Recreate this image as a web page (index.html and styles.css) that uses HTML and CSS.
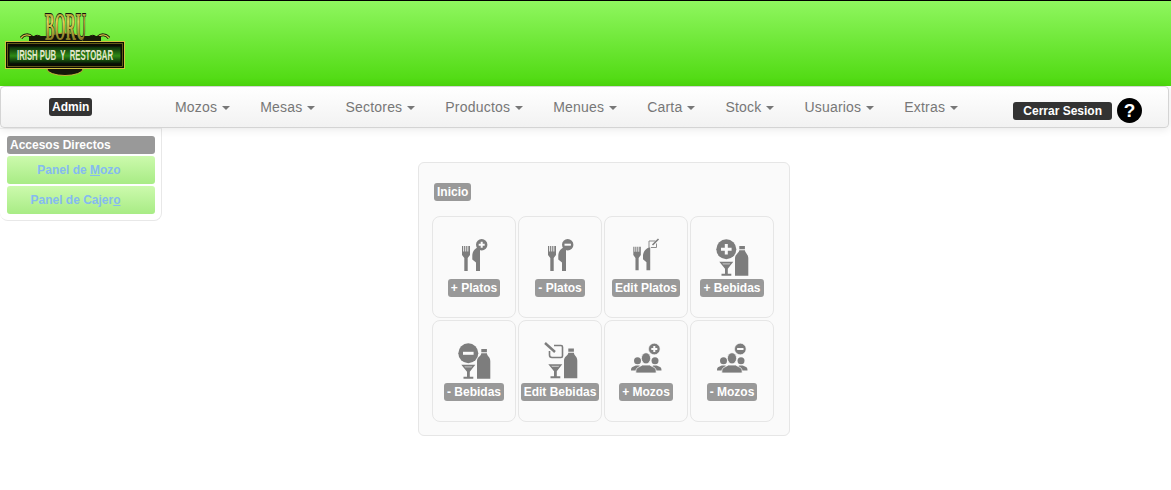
FILE: index.html
```html
<!DOCTYPE html>
<html lang="es">
<head>
<meta charset="utf-8">
<title>Boru</title>
<link rel="stylesheet" href="styles.css">
</head>
<body>
<svg class="defs" width="0" height="0" aria-hidden="true">
  <defs>
    <symbol id="fork" viewBox="0 0 64 47">
      <path d="M20 14h1.200v5.500h.9V14h1.200v5.500h.9V14h1.200v5.500h.9V14H28v9l-2.300 3v13h-3.400V26L20 23z"/>
      <path d="M38 14.500c-4.500 1-7.700 4.500-7.700 9.500v3.500l3.700 3V39h4z"/>
    </symbol>
    <symbol id="glass" viewBox="0 0 64 47">
      <path d="M19.300 29.700h14l-5.500 7v5h3.500v2h-9.800v-2h3.500v-5z"/>
      <path class="glass-in" d="M22.300 31.200h8l-.8 1.200h-6.400z"/>
      <path d="M39.300 14h5.600v3.300h-5.600zM39.300 18.300h5.600c.2 3 3.400 3.700 3.400 8v17.400H35V26.300c0-4.300 4.100-5 4.300-8z"/>
    </symbol>
    <symbol id="people" viewBox="0 0 64 47">
      <circle cx="23.500" cy="24.700" r="3.500"/>
      <circle cx="41" cy="24.700" r="3.500"/>
      <path d="M17 34.500c0-2.300.5-3 2-3.700l2.800-1.300h3.500l2 1.500-4.300 3.500zM47.500 34.500c0-2.300-.5-3-2-3.700l-2.800-1.300h-3.500l-2 1.500 4.300 3.500z"/>
      <ellipse class="person-main" cx="32" cy="22.300" rx="4.600" ry="5.600"/>
      <path class="person-main" d="M21.800 37c0-4 .7-5 3-6l3.700-2h7l3.700 2c2.300 1 3 2 3 6z"/>
    </symbol>
  </defs>
</svg>

<header class="top">
  <svg class="logo" width="120" height="66" viewBox="0 0 120 66" role="img" aria-label="Boru Irish Pub y Restobar">
    <defs>
      <linearGradient id="gold" x1="0" y1="0" x2="0" y2="1">
        <stop offset="0" stop-color="#6a6210"/><stop offset=".4" stop-color="#e2d25a"/><stop offset="1" stop-color="#5a520c"/>
      </linearGradient>
      <linearGradient id="ban" x1="0" y1="0" x2="0" y2="1">
        <stop offset="0" stop-color="#0a280a"/><stop offset=".55" stop-color="#2f8a16"/><stop offset="1" stop-color="#061a06"/>
      </linearGradient>
    </defs>
    <path class="logo-curl-back" d="M16 28c3-4 8-4 11-1 3 3 6 4 9 2-1-3-5-4-7 0M104 28c-3-4-8-4-11-1-3 3-6 4-9 2 1-3 5-4 7 0"/>
    <path class="logo-curl" d="M16 28c3-4 8-4 11-1 3 3 6 4 9 2-1-3-5-4-7 0M104 28c-3-4-8-4-11-1-3 3-6 4-9 2 1-3 5-4 7 0"/>
    <path d="M24 26h72v6H24z" fill="#171a08"/>
    <ellipse cx="60" cy="29" rx="18" ry="6" fill="#14170a" stroke="#c4b23a"/>
    <ellipse cx="60" cy="59" rx="18" ry="6.500" fill="#14170a" stroke="#c4b23a"/>
    <text class="logo-boru" x="40" y="29.500" textLength="41" lengthAdjust="spacingAndGlyphs">BORU</text>
    <rect x=".5" y="31.500" width="119" height="27" fill="#0b0d03" stroke="#d2c040"/>
    <rect x="2.500" y="33.500" width="115" height="23" fill="none" stroke="#8a7e22" stroke-width=".7"/>
    <rect x="4.500" y="36.500" width="111" height="17" fill="url(#ban)"/>
    <text class="logo-sub" x="12" y="50" textLength="96" lengthAdjust="spacingAndGlyphs">IRISH PUB  Y  RESTOBAR</text>
  </svg>
</header>

<nav class="bar">
  <div class="bar-user"><span class="tag tag-dark">Admin</span></div>
  <ul class="menu">
    <li><a href="#">Mozos<i class="caret"></i></a></li>
    <li><a href="#">Mesas<i class="caret"></i></a></li>
    <li><a href="#">Sectores<i class="caret"></i></a></li>
    <li><a href="#">Productos<i class="caret"></i></a></li>
    <li><a href="#">Menues<i class="caret"></i></a></li>
    <li><a href="#">Carta<i class="caret"></i></a></li>
    <li><a href="#">Stock<i class="caret"></i></a></li>
    <li><a href="#">Usuarios<i class="caret"></i></a></li>
    <li><a href="#">Extras<i class="caret"></i></a></li>
  </ul>
  <div class="bar-end">
    <a href="#" class="tag tag-dark tag-logout">Cerrar Sesion</a>
    <a href="#" class="help">?</a>
  </div>
</nav>

<div class="content">
  <aside class="side">
    <div class="side-title">Accesos Directos</div>
    <a href="#" class="side-btn">Panel de <u>M</u>ozo</a>
    <a href="#" class="side-btn side-btn-wide">Panel de Cajer<u>o</u></a>
  </aside>

  <main class="panel">
    <div class="panel-head"><span class="tag tag-grey">Inicio</span></div>
    <div class="grid">
      <a href="#" class="cell">
        <svg class="ico" viewBox="0 0 64 47"><use href="#fork"/><circle class="badge" cx="39.700" cy="12.700" r="5.700"/><path class="cut" d="M36.700 12.700h6M39.700 9.700v6"/></svg>
        <span class="tag tag-grey">+ Platos</span>
      </a>
      <a href="#" class="cell">
        <svg class="ico" viewBox="0 0 64 47"><use href="#fork"/><circle class="badge" cx="39.700" cy="12.700" r="5.700"/><path class="cut" d="M36.500 12.700h6.400"/></svg>
        <span class="tag tag-grey">- Platos</span>
      </a>
      <a href="#" class="cell">
        <svg class="ico" viewBox="0 0 64 47"><use href="#fork" transform="translate(.5 1.500) scale(.94)"/><path class="line" d="M35 16V9h6.500"/><path class="line" d="M42.500 11.500V15.500H37"/><path class="line line-b" d="M38.500 13l6-6"/></svg>
        <span class="tag tag-grey">Edit Platos</span>
      </a>
      <a href="#" class="cell">
        <svg class="ico" viewBox="0 0 64 47"><use href="#glass"/><circle cx="26.300" cy="17.300" r="10"/><path class="cut cut-b" d="M21 17.300h10.600M26.300 12v10.600"/></svg>
        <span class="tag tag-grey">+ Bebidas</span>
      </a>
      <a href="#" class="cell">
        <svg class="ico" viewBox="0 0 64 47"><use href="#glass" y="-1"/><circle cx="26.300" cy="17.300" r="10"/><path class="cut cut-b" d="M21 17.300h10.600"/></svg>
        <span class="tag tag-grey">- Bebidas</span>
      </a>
      <a href="#" class="cell">
        <svg class="ico" viewBox="0 0 64 47"><use href="#glass" x="1" y="-1.500"/><path class="line line-b" d="M26 9.500h7c1 0 1.500.5 1.500 1.500v9c0 1-.5 1.500-1.500 1.500h-9c-1.500 0-2.500-1-2.500-2.500v-4"/><path class="pencil" d="M17 7l10 9"/></svg>
        <span class="tag tag-grey">Edit Bebidas</span>
      </a>
      <a href="#" class="cell">
        <svg class="ico" viewBox="0 0 64 47"><use href="#people"/><circle class="badge badge-ring" cx="40.300" cy="13" r="5.800"/><path class="cut" d="M37.300 13h6M40.300 10v6"/></svg>
        <span class="tag tag-grey">+ Mozos</span>
      </a>
      <a href="#" class="cell">
        <svg class="ico" viewBox="0 0 64 47"><use href="#people"/><circle class="badge badge-ring" cx="40.300" cy="13" r="5.800"/><path class="cut" d="M37.100 13h6.400"/></svg>
        <span class="tag tag-grey">- Mozos</span>
      </a>
    </div>
  </main>
</div>
</body>
</html>
```

FILE: styles.css
```css
* { box-sizing: border-box; }
html, body { margin: 0; padding: 0; }
body {
  background: #fff;
  font-family: "Liberation Sans", Arial, sans-serif;
  font-size: 14px;
  color: #333;
  height: 490px;
  overflow: hidden;
}
a { text-decoration: none; }
.defs { position: absolute; }

.top {
  height: 86px;
  border-top: 1px solid #000;
  background: linear-gradient(#8ff65f, #4dd90e);
  padding: 9px 0 0 5px;
}
.logo { display: block; overflow: visible; }
.logo-curl-back { fill: none; stroke: #14130a; stroke-width: 3; }
.logo-curl { fill: none; stroke: #d2c040; stroke-width: 1.4; }
.logo-boru {
  font: bold 40px "Liberation Serif", serif;
  fill: url(#gold);
  stroke: #14130a;
  stroke-width: 2;
  paint-order: stroke;
}
.logo-sub { font: bold 14px "Liberation Sans", sans-serif; fill: #e4e8cc; white-space: pre; }

.bar {
  display: flex;
  align-items: center;
  width: 1169px;
  height: 42px;
  border: 1px solid #d4d4d4;
  border-radius: 4px;
  background: linear-gradient(#fff, #f2f2f2);
  box-shadow: 0 1px 10px rgba(0, 0, 0, .1);
  position: relative;
}
.bar-user {
  width: 159px;
  padding-left: 48px;
}
.menu {
  display: flex;
  list-style: none;
  margin: 0;
  padding: 0;
}
.menu a {
  display: block;
  padding: 10px 15px;
  color: #777;
  line-height: 20px;
  letter-spacing: .2px;
}
.caret {
  display: inline-block;
  margin-left: 5px;
  vertical-align: middle;
  border-top: 4px solid #777;
  border-left: 4px solid transparent;
  border-right: 4px solid transparent;
}
.bar-end {
  display: flex;
  align-items: center;
  margin-left: auto;
  padding: 7px 26px 0 0;
  gap: 5px;
}

.tag {
  display: inline-block;
  padding: 2px 3px;
  border-radius: 3px;
  font-size: 12px;
  font-weight: bold;
  line-height: 14px;
  color: #fff;
  white-space: nowrap;
}
.tag-dark { background: #333; }
.tag-grey { background: #999; }
.tag-logout { padding: 2px 10px; }
.help {
  width: 25px;
  height: 25px;
  border-radius: 50%;
  background: #000;
  color: #fff;
  font-size: 19px;
  font-weight: bold;
  line-height: 25px;
  text-align: center;
}

.content { display: flex; align-items: flex-start; }
.side {
  width: 162px;
  padding: 7px 6px 6px 7px;
  border: 1px solid #e8e8e8;
  border-top-color: #f2f2f2;
  border-left: 0;
  border-radius: 0 0 8px 8px;
  display: flex;
  flex-direction: column;
  gap: 2px;
  background: #fff;
}
.side-title {
  height: 18px;
  padding: 0 3px;
  border-radius: 3px;
  background: #999;
  color: #fff;
  font-size: 12px;
  font-weight: bold;
  line-height: 18px;
}
.side-btn {
  height: 28px;
  padding-right: 4px;
  border-radius: 3px;
  background: linear-gradient(#ccfaad, #a8ec85);
  color: #85baf0;
  font-size: 12px;
  font-weight: bold;
  line-height: 28px;
  text-align: center;
}
.side-btn-wide { padding-right: 11px; }

.panel {
  width: 372px;
  height: 274px;
  margin: 34px 0 0 256px;
  padding: 20px 13px 0;
  border: 1px solid #e6e6e6;
  border-radius: 6px;
  background: #fafafa;
}
.panel-head { height: 33px; padding-left: 2px; }
.grid {
  display: grid;
  grid-template-columns: repeat(4, 84px);
  grid-auto-rows: 102px;
  gap: 2px;
}
.cell {
  display: flex;
  flex-direction: column;
  align-items: center;
  padding-top: 15px;
  border: 1px solid #e6e6e6;
  border-radius: 8px;
}
.ico { display: block; flex: none; width: 64px; height: 47px; fill: #7d7d7d; }
.glass-in { fill: #bdbdbd; }
.person-main { stroke: #fafafa; stroke-width: .8; }
.badge { stroke: none; }
.badge-ring { stroke: #fafafa; stroke-width: .6; }
.cut { fill: none; stroke: #fafafa; stroke-width: 2; }
.cut-b { stroke-width: 3; }
.line { fill: none; stroke: #8c8c8c; stroke-width: 1; }
.line-b { stroke: #7d7d7d; stroke-width: 1.6; }
.pencil { fill: none; stroke: #7d7d7d; stroke-width: 2.4; }
```
